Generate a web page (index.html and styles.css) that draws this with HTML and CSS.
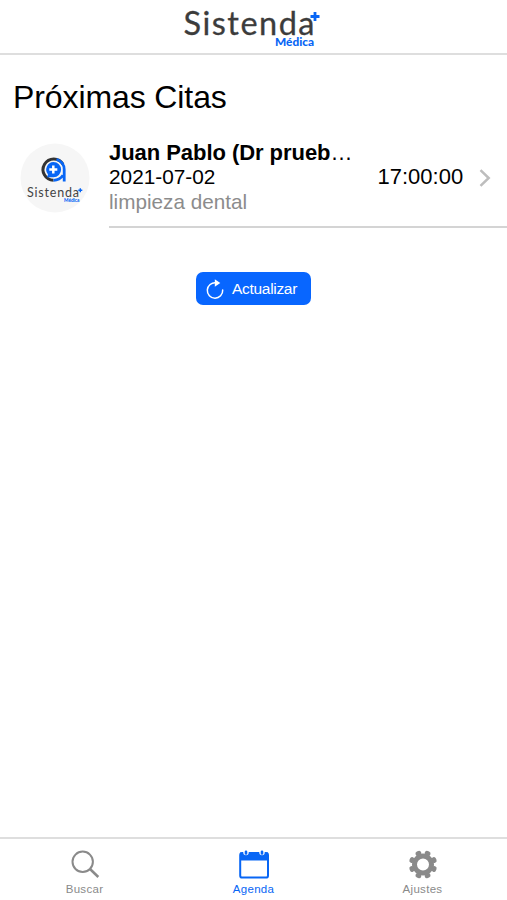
FILE: index.html
```html
<!DOCTYPE html>
<html lang="es">
<head>
<meta charset="utf-8">
<title>Sistenda Médica</title>
<link rel="stylesheet" href="styles.css">
</head>
<body>
<header class="topbar">
  <svg class="brand" viewBox="0 0 140 44" role="img">
    <text class="brand-name" x="0.5" y="31" textLength="131" lengthAdjust="spacing">Sistenda</text>
    <path class="brand-plus" d="M132 8v9M127.5 12.5h9"/>
    <text class="brand-sub" x="92" y="42" textLength="39" lengthAdjust="spacingAndGlyphs">Médica</text>
  </svg>
</header>
<main class="content">
  <h1 class="title">Próximas Citas</h1>
  <article class="item">
    <svg class="avatar" viewBox="0 0 70 70">
      <circle cx="35" cy="35" r="34.5" fill="#f6f6f6"/>
      <path d="M43 21.2A10.700 10.700 0 1 0 33.500 37.300" fill="none" stroke="#333" stroke-width="3"/>
      <path d="M36.500 16.300A10.700 10.700 0 0 1 44.200 26.600V38.500M33.500 37.300c4 0 7.500-2 9.500-5" fill="none" stroke="#0866f5" stroke-width="2.800"/>
      <path d="M33.500 19a7.600 7.600 0 1 1 0 15.200H27l1-2.800A7.600 7.600 0 0 1 33.500 19z" fill="#0866f5"/>
      <path d="M33.300 22.500v8M29.300 26.500h8" stroke="#fff" stroke-width="2.500"/>
      <text class="avatar-name" x="7" y="54" textLength="52" lengthAdjust="spacing">Sistenda</text>
      <path d="M60.300 45.200v4M58.300 47.200h4" stroke="#0866f5" stroke-width="1.400"/>
      <text class="avatar-sub" x="44" y="59" textLength="15.500" lengthAdjust="spacingAndGlyphs">Médica</text>
    </svg>
    <div class="row">
      <div class="details">
        <div class="name"><b>Juan Pablo (Dr prueb</b>…</div>
        <div class="date">2021-07-02</div>
        <div class="reason">limpieza dental</div>
      </div>
      <div class="time">17:00:00</div>
      <svg class="chevron" viewBox="0 0 12 18"><path d="M1.5 1.2L9.7 9l-8.2 7.8"/></svg>
    </div>
  </article>
  <button class="refresh">
    <svg class="refresh-icon" viewBox="0 0 20 22"><path d="M11 4.8A7.7 7.7 0 1 0 17.700 12" fill="none" stroke="#fff" stroke-width="1.500" stroke-linecap="round"/><path d="M9.800 1.200L15.300 5 9.800 8.800z" fill="#fff"/></svg>
    <span>Actualizar</span>
  </button>
</main>
<nav class="tabs">
  <a class="tab">
    <svg class="tab-icon" viewBox="0 0 32 32"><circle cx="13.700" cy="12.800" r="10.200" fill="none" stroke="currentColor" stroke-width="2"/><path d="M21 20l8.300 8" stroke="currentColor" stroke-width="2.500"/></svg>
    <span>Buscar</span>
  </a>
  <a class="tab tab-active">
    <svg class="tab-icon" viewBox="0 0 32 32"><rect x="2.200" y="4" width="27.800" height="24.600" rx="2.200" fill="none" stroke="currentColor" stroke-width="2"/><path d="M2 3.500h28v8H2z" fill="currentColor"/><circle cx="8" cy="3.600" r="2.700" fill="#fff"/><circle cx="24" cy="3.600" r="2.700" fill="#fff"/><path d="M8 2.800v1.600M24 2.800v1.600" stroke="currentColor" stroke-width="2.600" stroke-linecap="round"/></svg>
    <span>Agenda</span>
  </a>
  <a class="tab">
    <svg class="tab-icon" viewBox="0 0 32 32"><g transform="translate(16 15.500)" fill="none" stroke="currentColor"><circle r="8.500" stroke-width="5"/><g transform="rotate(22.500)" stroke-width="4.600" stroke-linecap="round"><path d="M-.7-12h1.400M-.7 12h1.400M-12-.7v1.400M12-.7v1.400"/><path d="M-.7-12h1.400M-.7 12h1.400M-12-.7v1.400M12-.7v1.400" transform="rotate(45)"/></g></g></svg>
    <span>Ajustes</span>
  </a>
</nav>
</body>
</html>
```
FILE: styles.css
```css
* { box-sizing: border-box; }
body {
  margin: 0;
  height: 900px;
  display: flex;
  flex-direction: column;
  background: #fff;
  color: #000;
  font-family: "Liberation Sans", Arial, sans-serif;
  overflow: hidden;
}
.topbar {
  height: 55px;
  flex: none;
  padding: 4px 0 0 183px;
  border-bottom: 2px solid #dedede;
}
.brand { display: block; width: 140px; height: 44px; }
.brand-name { font: 400 32.5px Lato, sans-serif; fill: #3c3c3c; stroke: #3c3c3c; stroke-width: 0.3; }
.brand-plus { stroke: #0866f5; stroke-width: 2.8; }
.brand-sub { font: 900 10.5px Lato, sans-serif; fill: #0866f5; }
.content { flex: 1; display: flex; flex-direction: column; }
.title {
  margin: 23px 0 0 13px;
  font-size: 32px;
  font-weight: 400;
  line-height: 38px;
  letter-spacing: -0.1px;
}
.item { display: flex; margin-top: 22px; padding-left: 20px; }
.avatar { width: 70px; height: 70px; margin: 5px 19px 0 0; flex: none; }
.avatar-name { font: 400 12.5px Lato, sans-serif; fill: #444; }
.avatar-sub { font: 900 5px Lato, sans-serif; fill: #0866f5; }
.row {
  flex: 1;
  display: flex;
  height: 90px;
  border-bottom: 2px solid #d4d4d4;
}
.details { width: 268.5px; white-space: nowrap; }
.name { padding-top: 1px; font-size: 22px; line-height: 27px; letter-spacing: -0.05px; }
.date { font-size: 20.8px; line-height: 22px; }
.reason { font-size: 20.7px; line-height: 27px; color: #8c8c8c; }
.time { width: 101.5px; padding-top: 27px; font-size: 22px; line-height: 24px; }
.chevron { width: 12px; height: 18px; margin-top: 31px; }
.chevron path { fill: none; stroke: #bdbdbd; stroke-width: 2.5; }
.refresh {
  align-self: center;
  display: flex;
  align-items: center;
  width: 115px;
  height: 33px;
  margin-top: 44px;
  padding: 0 0 0 9px;
  border: 0;
  border-radius: 7px;
  background: #0866ff;
  color: #fff;
  font: 15.5px "Liberation Sans", Arial, sans-serif;
  letter-spacing: -0.3px;
}
.refresh-icon { width: 20px; height: 22px; margin-right: 7px; }
.tabs {
  height: 63px;
  flex: none;
  display: flex;
  border-top: 2px solid #dedede;
}
.tab {
  flex: 1;
  display: flex;
  flex-direction: column;
  align-items: center;
  padding-top: 10px;
  color: #8a8a8a;
  font-size: 11.5px;
  letter-spacing: 0.3px;
  line-height: 16px;
}
.tab-active { color: #0866f5; }
.tab-icon { width: 32px; height: 32px; }
```
